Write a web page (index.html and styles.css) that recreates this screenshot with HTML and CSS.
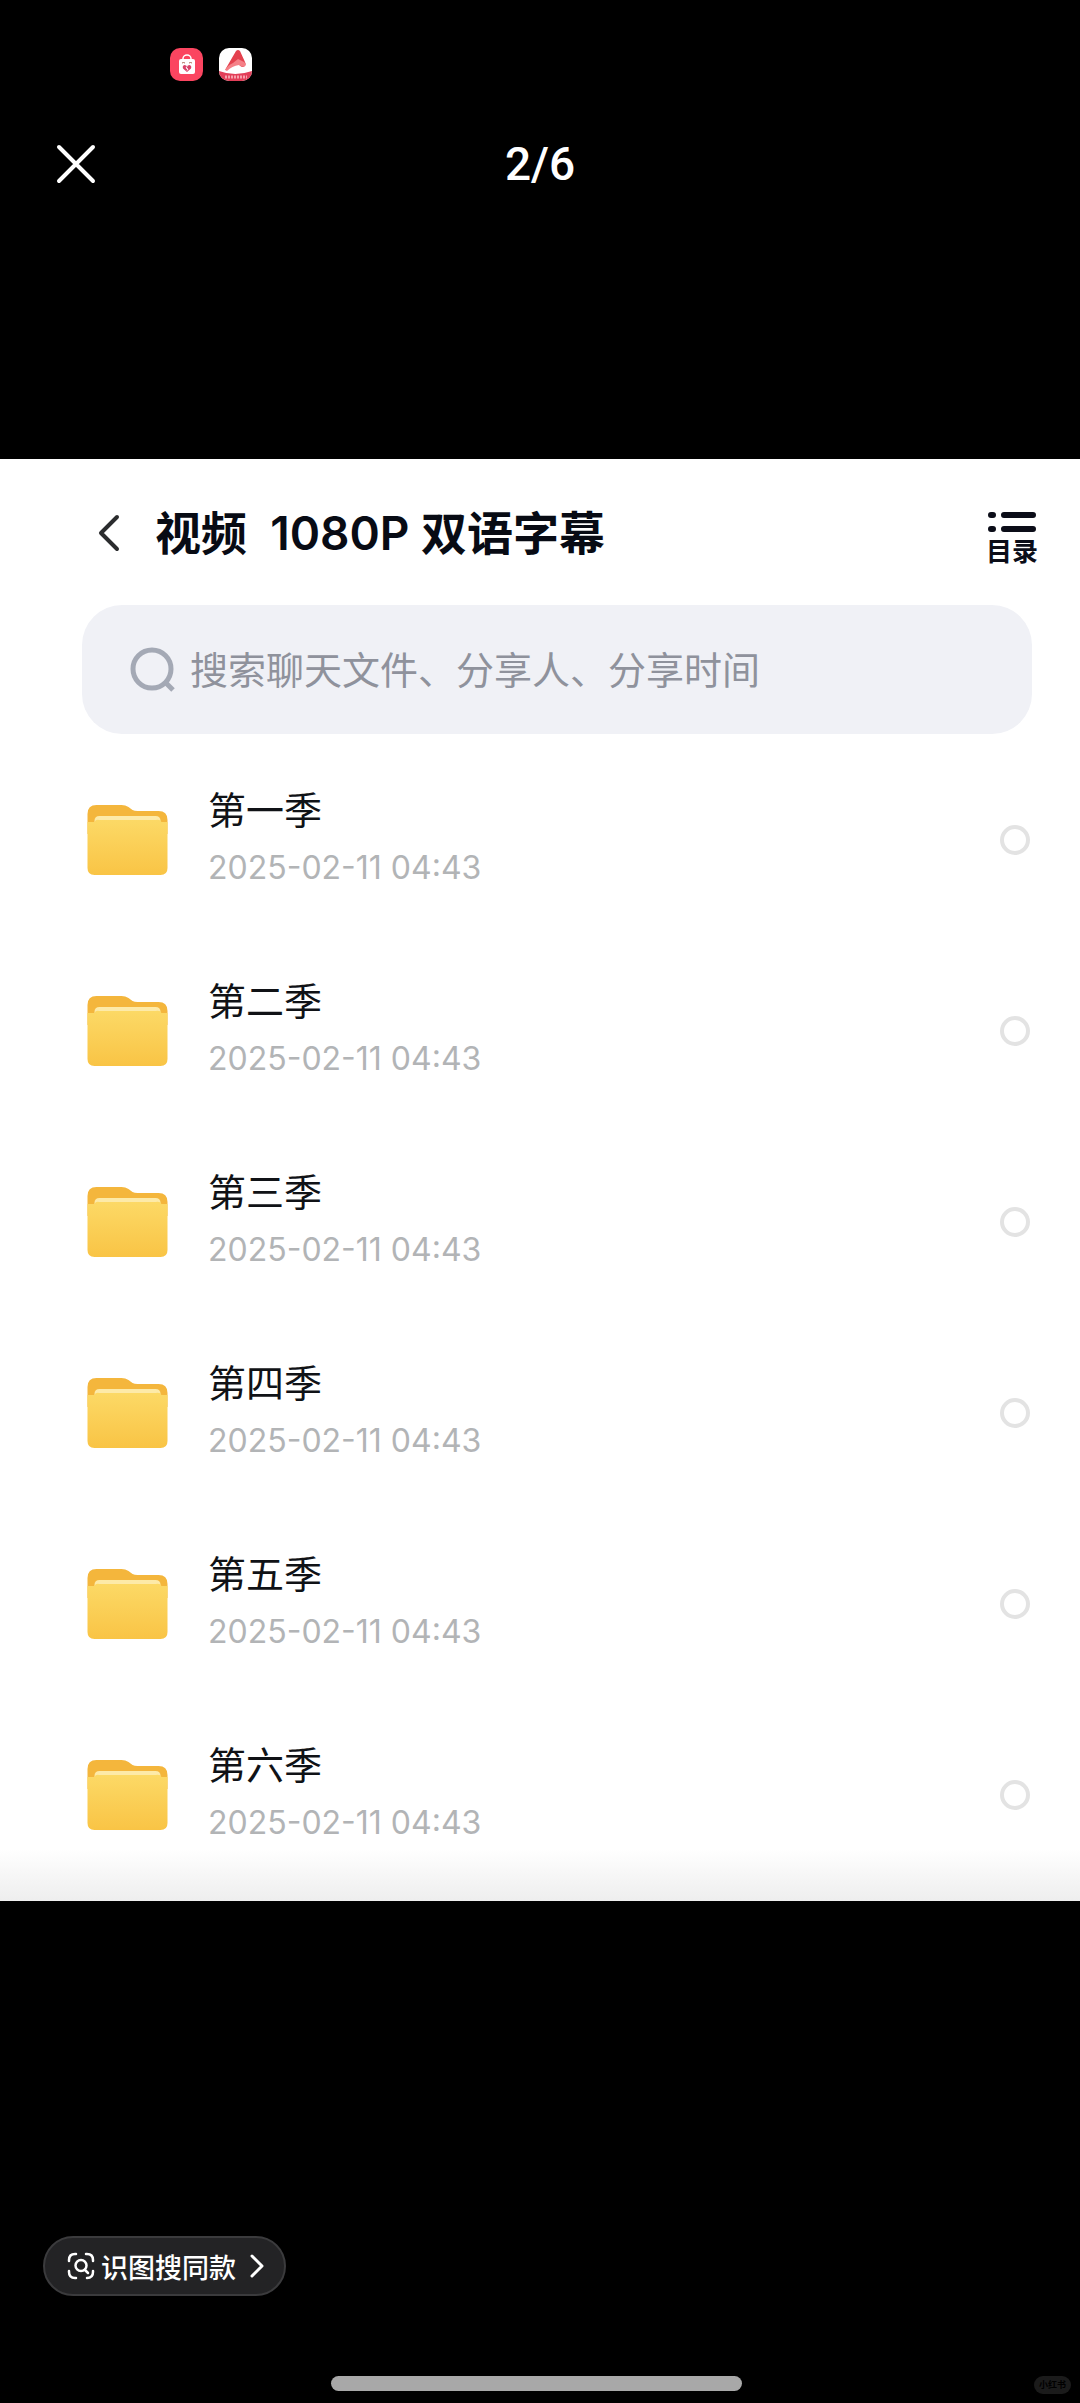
FILE: index.html
```html
<!DOCTYPE html>
<html lang="zh-CN">
<head>
<meta charset="utf-8">
<meta name="viewport" content="width=device-width, initial-scale=1">
<title>2/6</title>
<link rel="stylesheet" href="styles.css">
</head>
<body>
<svg class="defs" aria-hidden="true">
  <defs>
    <linearGradient id="front" x1="0" y1="0" x2="0" y2="1">
      <stop offset="0" stop-color="#fcd966"/>
      <stop offset="1" stop-color="#f9c445"/>
    </linearGradient>
    <symbol id="folder" viewBox="0 0 80 71">
      <path d="M0 30V10Q0 1 9 1H34Q38 1 41 3L45 6Q47 7 50 7H71Q80 7 80 16V30Z" fill="#f4b63c"/>
      <path d="M7 24V17Q7 12 12 12H68Q73 12 73 17V24Z" fill="#fdeaa8"/>
      <path d="M0 18H7Q8 15 12 16H68Q73 15 74 18H80V64Q80 71 73 71H7Q0 71 0 64Z" fill="url(#front)"/>
    </symbol>
  </defs>
</svg>
<div class="viewer">
  <div class="status">
    <svg class="app" viewBox="0 0 33 33" aria-hidden="true">
      <rect width="33" height="33" rx="10" fill="#fb4560"/>
      <path d="M13 13V10.500a4 3.500 0 0 1 8 0V13" fill="none" stroke="#fff" stroke-width="1.500"/>
      <rect x="9" y="11" width="16" height="15" rx="2" fill="#fff"/>
      <path d="M12 15q1.500-1 3 0M19 15q1.500-1 3 0" fill="none" stroke="#a65" stroke-width="1"/>
      <path d="M17 24l-4-3.500q-1-3 1.500-3.500 2 0 2.500 1.500 .5-1.500 2.500-1.500 2.500.5 1.500 3.500z" fill="#d8436a"/>
      <path d="M17 18.500l-1 1.500 2 1-1 1.500" fill="none" stroke="#fff" stroke-width="1"/>
    </svg>
    <svg class="app" viewBox="0 0 33 33" aria-hidden="true">
      <defs><clipPath id="tile"><rect width="33" height="33" rx="10"/></clipPath></defs>
      <g clip-path="url(#tile)">
        <rect width="33" height="33" fill="#fff"/>
        <path d="M6 22L17 3Q19 1 21 3L26 14Q28 18 24 19Q21 19 19 15L12 19Z" fill="#e4414e"/>
        <path d="M6 22Q9 17 14 15L19 11L23 13Q28 15 26 18Q24 20 20 17Q13 18 8 23Z" fill="#f58087"/>
        <path d="M0 23Q16 29 33 23V33H0Z" fill="#e23f59"/>
        <path d="M6 29H28" stroke="#f7a0ac" stroke-width="3" stroke-dasharray="2 1"/>
      </g>
    </svg>
  </div>

  <header class="topbar">
    <button class="close" aria-label="关闭">
      <svg viewBox="0 0 40 40" width="40" height="40"><path d="M3 3L37 37M37 3L3 37" fill="none" stroke="#fff" stroke-width="4" stroke-linecap="round"/></svg>
    </button>
    <p class="count">2/6</p>
  </header>

  <main class="sheet">
    <div class="titlebar">
      <button class="back" aria-label="返回">
        <svg viewBox="0 0 24 40" width="24" height="40"><path d="M20 4L4 20L20 36" fill="none" stroke="#2b2c2e" stroke-width="4" stroke-linecap="round" stroke-linejoin="round"/></svg>
      </button>
      <h1 class="title">视频  1080P 双语字幕</h1>
      <button class="toc">
        <svg viewBox="0 0 48 22" width="48" height="22" aria-hidden="true"><path d="M3 4H5M16 4H45M3 18H5M16 18H45" stroke="#0b0d18" stroke-width="6" stroke-linecap="round"/></svg>
        <span>目录</span>
      </button>
    </div>

    <label class="search">
      <svg viewBox="0 0 46 46" width="46" height="46" aria-hidden="true"><circle cx="22" cy="22" r="19" fill="none" stroke="#a4a9b5" stroke-width="5"/><path d="M35 35L43 43" stroke="#a4a9b5" stroke-width="5"/></svg>
      <input type="search" aria-label="搜索" placeholder="搜索聊天文件、分享人、分享时间">
    </label>

    <ul class="list">
      <li class="row">
        <svg class="folder" aria-hidden="true"><use href="#folder"/></svg>
        <label class="info" for="s1"><span class="name">第一季</span><time class="date">2025-02-11 04:43</time></label>
        <input class="pick" type="radio" name="season" id="s1">
      </li>
      <li class="row">
        <svg class="folder" aria-hidden="true"><use href="#folder"/></svg>
        <label class="info" for="s2"><span class="name">第二季</span><time class="date">2025-02-11 04:43</time></label>
        <input class="pick" type="radio" name="season" id="s2">
      </li>
      <li class="row">
        <svg class="folder" aria-hidden="true"><use href="#folder"/></svg>
        <label class="info" for="s3"><span class="name">第三季</span><time class="date">2025-02-11 04:43</time></label>
        <input class="pick" type="radio" name="season" id="s3">
      </li>
      <li class="row">
        <svg class="folder" aria-hidden="true"><use href="#folder"/></svg>
        <label class="info" for="s4"><span class="name">第四季</span><time class="date">2025-02-11 04:43</time></label>
        <input class="pick" type="radio" name="season" id="s4">
      </li>
      <li class="row">
        <svg class="folder" aria-hidden="true"><use href="#folder"/></svg>
        <label class="info" for="s5"><span class="name">第五季</span><time class="date">2025-02-11 04:43</time></label>
        <input class="pick" type="radio" name="season" id="s5">
      </li>
      <li class="row">
        <svg class="folder" aria-hidden="true"><use href="#folder"/></svg>
        <label class="info" for="s6"><span class="name">第六季</span><time class="date">2025-02-11 04:43</time></label>
        <input class="pick" type="radio" name="season" id="s6">
      </li>
    </ul>
  </main>

  <footer class="bottom">
    <button class="similar">
      <svg viewBox="0 0 28 28" width="28" height="28" aria-hidden="true"><g fill="none" stroke="#fff" stroke-width="2.500" stroke-linecap="round"><path d="M2 9V8Q2 2 8 2H9M19 2H20Q26 2 26 8V9M26 19V20Q26 26 20 26M9 26H8Q2 26 2 20V19"/><circle cx="14" cy="13.500" r="5.500"/><path d="M18 18L21 21"/></g></svg>
      <span>识图搜同款</span>
      <svg class="next" viewBox="0 0 14 24" width="14" height="24" aria-hidden="true"><path d="M2 2L12 12L2 22" fill="none" stroke="#fff" stroke-width="3" stroke-linecap="round" stroke-linejoin="round"/></svg>
    </button>
    <div class="navbar">
      <span class="home"></span>
      <span class="mark">小红书</span>
    </div>
  </footer>
</div>
</body>
</html>
```
FILE: styles.css
```css
* {
  box-sizing: border-box;
}

body {
  margin: 0;
  background: #000;
  font-family: Inter, "Noto Sans CJK SC", sans-serif;
}

button {
  margin: 0;
  padding: 0;
  border: 0;
  background: none;
  color: inherit;
  font: inherit;
}

svg {
  display: block;
  flex: none;
}

.defs {
  position: absolute;
  width: 0;
  height: 0;
}

.viewer {
  display: flex;
  flex-direction: column;
  min-height: 100vh;
}

.status {
  display: flex;
  gap: 16px;
  padding: 48px 170px 0;
}

.app {
  width: 33px;
  height: 33px;
}

.topbar {
  display: grid;
  grid-template-columns: 1fr auto 1fr;
  align-items: center;
  height: 80px;
  margin-top: 43px;
  padding: 0 56px;
  color: #fff;
}

.close {
  justify-self: start;
}

.count {
  margin: 0;
  font: 500 46px/60px Roboto, sans-serif;
}

.sheet {
  margin-top: 255px;
  padding: 39px 48px 11px 82px;
  background: linear-gradient(to top, #eee, #fff 52px);
}

.titlebar {
  display: flex;
  align-items: center;
  height: 70px;
  padding-left: 15px;
}

.title {
  flex: 1;
  margin: 0 0 0 34px;
  color: #080b14;
  font-size: 46px;
  font-weight: 600;
  line-height: 70px;
  white-space: pre;
}

.toc {
  display: flex;
  flex-direction: column;
  align-items: center;
  gap: 4px;
  margin: 12px -6px 0 0;
  color: #0b0d18;
  font-size: 26px;
  font-weight: 700;
  line-height: 30px;
}

.search {
  display: flex;
  align-items: center;
  gap: 14px;
  height: 129px;
  margin-top: 37px;
  padding: 0 48px;
  border-radius: 40px;
  background: #f0f1f6;
}

.search input {
  flex: 1;
  min-width: 0;
  padding: 0 0 4px;
  border: 0;
  outline: 0;
  background: none;
  font: 400 38px/56px "Noto Sans CJK SC", sans-serif;
}

.search input::placeholder {
  color: #8f929c;
  opacity: 1;
}

.list {
  margin: 10px 0 0;
  padding: 0;
  list-style: none;
}

.row {
  display: flex;
  align-items: center;
  height: 191px;
  padding: 0 2px 0 5px;
}

.folder {
  width: 81px;
  height: 71px;
}

.info {
  display: flex;
  flex: 1;
  flex-direction: column;
  margin-left: 40px;
}

.name {
  color: #101216;
  font-size: 38px;
  line-height: 56px;
}

.date {
  color: #b2b4b6;
  font-size: 32px;
  line-height: 60px;
}

.pick {
  width: 30px;
  height: 30px;
  margin: 0;
  border: 4px solid #e3e3e3;
  border-radius: 50%;
  appearance: none;
}

.pick:checked {
  background: #f9c445;
}

.bottom {
  display: flex;
  flex: 1;
  flex-direction: column;
  justify-content: space-between;
  align-items: flex-start;
  padding-top: 335px;
}

.similar {
  display: flex;
  align-items: center;
  height: 60px;
  margin-left: 43px;
  padding: 0 20px 0 22px;
  border: 2px solid #3b3b3d;
  border-radius: 30px;
  background: #232325;
  color: #fff;
  font-size: 27px;
  font-weight: 500;
  gap: 6px;
}

.next {
  margin-left: 8px;
}

.navbar {
  display: grid;
  grid-template-columns: 1fr 38.5% 1fr;
  align-items: start;
  width: 100%;
  padding: 0 9px 9px 2px;
}

.home {
  grid-column: 2;
  height: 15px;
  border-radius: 8px;
  background: #a8a8a8;
}

.mark {
  justify-self: end;
  padding: 0 5px;
  border-radius: 9px;
  background: #1b1b1b;
  color: #000;
  font-size: 9px;
  font-weight: 700;
  line-height: 18px;
}
```
